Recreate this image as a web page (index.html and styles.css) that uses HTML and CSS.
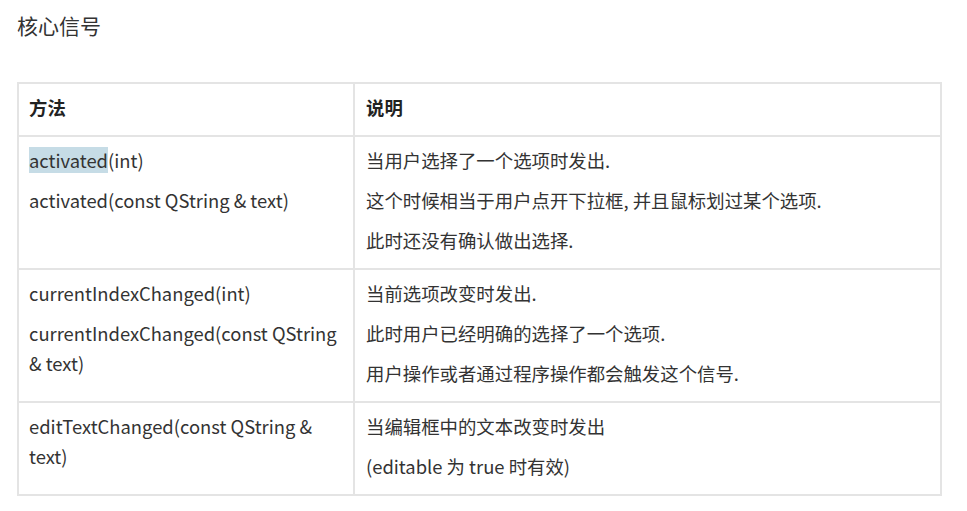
FILE: index.html
```html
<!DOCTYPE html>
<html lang="zh-CN">
<head>
<meta charset="utf-8">
<link rel="stylesheet" href="styles.css">
</head>
<body>
<div class="page">
  <h2 class="title">核心信号</h2>
  <table class="sig">
    <thead>
      <tr><th class="c1">方法</th><th class="c2">说明</th></tr>
    </thead>
    <tbody>
      <tr>
        <td class="c1"><p><span class="hl">activated</span>(int)</p><p>activated(const QString &amp; text)</p></td>
        <td class="c2"><p>当用户选择了一个选项时发出.</p><p>这个时候相当于用户点开下拉框, 并且鼠标划过某个选项.</p><p>此时还没有确认做出选择.</p></td>
      </tr>
      <tr>
        <td class="c1"><p>currentIndexChanged(int)</p><p>currentIndexChanged(const QString &amp; text)</p></td>
        <td class="c2"><p>当前选项改变时发出.</p><p>此时用户已经明确的选择了一个选项.</p><p>用户操作或者通过程序操作都会触发这个信号.</p></td>
      </tr>
      <tr>
        <td class="c1"><p>editTextChanged(const QString &amp; text)</p></td>
        <td class="c2"><p>当编辑框中的文本改变时发出</p><p>(editable 为 true 时有效)</p></td>
      </tr>
    </tbody>
  </table>
</div>
</body>
</html>
```

FILE: styles.css
```css
html, body {
  margin: 0;
  padding: 0;
  background: #ffffff;
}
.page {
  padding: 10px 0 0 17px;
  font-family: "Noto Sans CJK SC", "Noto Sans", sans-serif;
  color: #333333;
}
.title {
  margin: 0;
  font-size: 21px;
  font-weight: normal;
  line-height: 30px;
  color: #333333;
}
.sig {
  margin-top: 42px;
  border-collapse: collapse;
  width: 925px;
  table-layout: fixed;
  font-size: 18.4px;
}
.sig th, .sig td {
  border: 2px solid #e4e4e4;
  padding: 8px 12px 13px 11px;
  text-align: left;
  vertical-align: top;
  line-height: 30px;
}
.sig th {
  font-weight: bold;
  color: #222222;
}
.sig .c1 {
  width: 312px;
  padding-left: 10px;
}
.sig p {
  margin: 0 0 10px 0;
}
.sig p:last-child {
  margin-bottom: 0;
}
.hl {
  background: #c6dce6;
}
```
